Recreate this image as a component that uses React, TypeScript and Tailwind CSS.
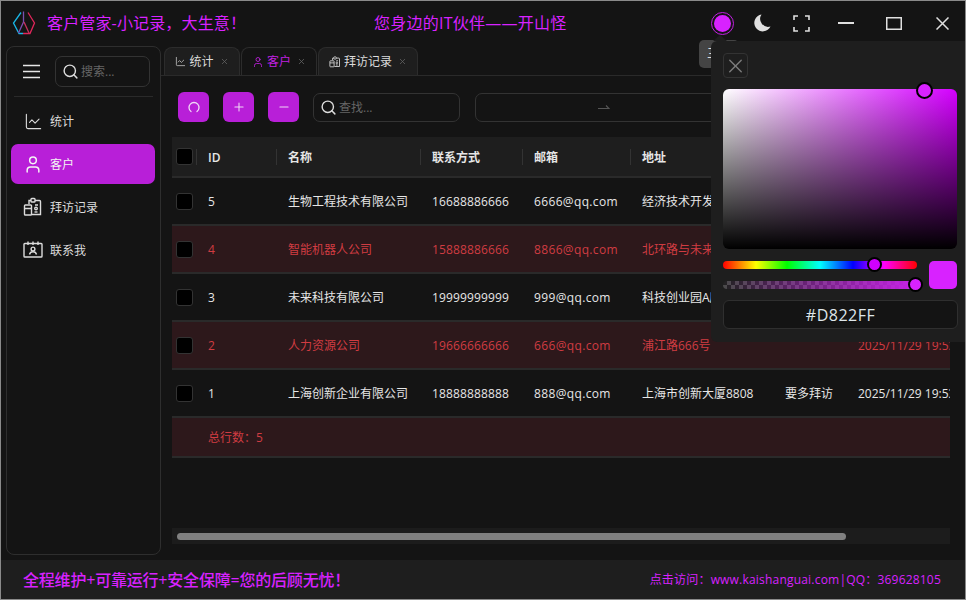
import { ChartLine, Plus, Minus, Search, User, X } from 'lucide-react';

const font = { fontFamily: '"Open Sans", "Noto Sans CJK SC", sans-serif' };

const VisitIcon = ({ size = 20 }: { size?: number }) => (
  <svg width={size} height={size} viewBox="0 0 20 20" fill="none" stroke="currentColor" strokeWidth="1.4">
    <path d="M6 7V3.500h2M12 3.500h4.500a1 1 0 0 1 1 1v13H9" />
    <rect x="8" y="1.500" width="4" height="3.500" rx="0.800" />
    <rect x="1.500" y="8" width="7" height="10" rx="0.800" />
    <path d="M1.500 11.500h7M12 8h3" />
    <circle cx="13" cy="11.500" r="1.300" />
    <path d="M11.500 15h3" />
  </svg>
);

const ContactIcon = () => (
  <svg width="20" height="20" viewBox="0 0 20 20" fill="none" stroke="currentColor" strokeWidth="1.400">
    <rect x="1" y="3.500" width="18" height="13.500" rx="0.800" />
    <path d="M5 1.500v3.500M10 1.500v3.500M15 1.500v3.500" />
    <circle cx="10" cy="9" r="1.900" />
    <path d="M6.500 14.500c.4-2 1.800-2.800 3.500-2.800s3.100.8 3.500 2.800" />
  </svg>
);

const Logo = () => (
  <svg width="24" height="24" viewBox="0 0 24 24" fill="none" strokeWidth="1.300">
    <path d="M9 1.500 1.500 12 7 22.500h4" stroke="#19b6e6" />
    <path d="M16 1.500 22.500 12 18 22.500h-7" stroke="#e0265a" />
    <path d="M11.500 0.500V11L6.500 22" stroke="#7a4fb0" />
    <path d="M12 11l5 11" stroke="#c8305f" />
  </svg>
);

const RefreshArc = () => (
  <svg width="12" height="12" viewBox="0 0 12 12" fill="none" stroke="currentColor" strokeWidth="1.300">
    <path d="M3 10.500A5 5 0 1 1 9 10.500" strokeLinecap="round" />
  </svg>
);

const MoonIcon = () => (
  <svg width="17" height="18" viewBox="0 0 17 18" fill="currentColor">
    <path d="M7.500 0.500A8.500 8.500 0 1 0 16.500 12.500 8 8 0 0 1 7.500 0.500Z" />
  </svg>
);

const FullIcon = () => (
  <svg width="17" height="17" viewBox="0 0 17 17" fill="none" stroke="currentColor" strokeWidth="1.600">
    <path d="M1 5V1h4M12 1h4v4M16 12v4h-4M5 16H1v-4" />
  </svg>
);

const MinIcon = () => (
  <svg width="16" height="2" viewBox="0 0 16 2" stroke="currentColor" strokeWidth="2">
    <path d="M0 1h16" />
  </svg>
);

const MaxIcon = () => (
  <svg width="16" height="13" viewBox="0 0 16 13" fill="none" stroke="currentColor" strokeWidth="1.500">
    <rect x="0.750" y="0.750" width="14.500" height="11.500" />
  </svg>
);

const CloseIcon = () => (
  <svg width="13" height="13" viewBox="0 0 13 13" stroke="currentColor" strokeWidth="1.500">
    <path d="M0.500 0.500l12 12M12.500 0.500l-12 12" />
  </svg>
);

const menu = [
  { label: '统计', icon: <ChartLine size={19} strokeWidth={1.400} /> },
  { label: '客户', icon: <User size={21} strokeWidth={1.800} />, active: true },
  { label: '拜访记录', icon: <VisitIcon /> },
  { label: '联系我', icon: <ContactIcon /> },
];

const rows = [
  { id: '5', name: '生物工程技术有限公司', phone: '16688886666', mail: '6666@qq.com', addr: '经济技术开发区', note: '', time: '' },
  { id: '4', name: '智能机器人公司', phone: '15888886666', mail: '8866@qq.com', addr: '北环路与未来路', note: '', time: '', red: true },
  { id: '3', name: '未来科技有限公司', phone: '19999999999', mail: '999@qq.com', addr: '科技创业园A座', note: '', time: '' },
  { id: '2', name: '人力资源公司', phone: '19666666666', mail: '666@qq.com', addr: '浦江路666号', note: '', time: '2025/11/29 19:53', red: true },
  { id: '1', name: '上海创新企业有限公司', phone: '18888888888', mail: '888@qq.com', addr: '上海市创新大厦8808', note: '要多拜访', time: '2025/11/29 19:53' },
];

const headers = ['ID', '名称', '联系方式', '邮箱', '地址'];
const gridCols = 'grid grid-cols-[24px_80px_144px_102px_108px_143px_73px_200px] w-[974px] items-center';

const Check = () => (
  <span className="w-[17px] h-[17px] bg-black border border-[#333] rounded-[3px] ml-[4px] block" />
);

const ActionButton = ({ children }: { children: React.ReactNode }) => (
  <button className="w-[31px] h-[30px] rounded-[6px] bg-[#b81fd8] text-[#f0d8f6] flex items-center justify-center">
    {children}
  </button>
);

const Tab = ({ label, icon, width, active }: { label: string; icon: React.ReactNode; width: string; active?: boolean }) => (
  <div
    className={`${width} h-[28px] rounded-t-[8px] border border-b-0 border-[#2c2c2c] flex items-center justify-center gap-[3px] text-[12px] ${
      active ? 'bg-[#141414] text-[#c020e0]' : 'bg-[#1e1e1e] text-[#dcdcdc]'
    }`}
  >
    {icon}
    <span>{label}</span>
    <X size={9} className="ml-[3px] text-[#666]" />
  </div>
);

const ColorPicker = () => (
  <div className="absolute left-[710px] top-[40px] w-[255px] h-[301px] bg-[#1e1e1e] rounded-l-[6px] pl-[12px] pr-[9px] pt-[12px] z-10">
    <div className="absolute -top-[6px] left-[2px] w-0 h-0 border-x-[7px] border-x-transparent border-b-[6px] border-b-[#1e1e1e]" />
    <button className="w-[25px] h-[25px] border border-[#333] rounded-[4px] flex items-center justify-center text-[#7d7d7d]">
      <X size={26} strokeWidth={1.400} />
    </button>
    <div className="relative mt-[11px] h-[160px] w-[234px] rounded-[6px] bg-[linear-gradient(to_bottom,transparent,#000),linear-gradient(to_right,#fff,#d400ff)]">
      <span className="absolute left-[193px] -top-[7px] w-[17px] h-[17px] rounded-full bg-[#d822ff] border-2 border-black" />
    </div>
    <div className="flex mt-[12px] gap-[12px]">
      <div className="w-[194px] flex flex-col gap-[12px]">
        <div className="relative h-[8px] rounded-full bg-[linear-gradient(to_right,#f00,#ff0_17%,#0f0_33%,#0ff_50%,#00f_67%,#f0f_83%,#f00)]">
          <span className="absolute left-[144px] -top-[4px] w-[15px] h-[15px] rounded-full bg-[#d000ff] border-2 border-black" />
        </div>
        <div className="relative h-[8px] rounded-full bg-[linear-gradient(to_right,transparent,#c822e8),repeating-conic-gradient(#4a4a4a_0_25%,#222_0_50%)] bg-[length:100%_100%,8px_8px]">
          <span className="absolute left-[185px] -top-[4px] w-[15px] h-[15px] rounded-full bg-[#d822ff] border-2 border-black" />
        </div>
      </div>
      <div className="w-[28px] h-[28px] rounded-[5px] bg-[#d822ff]" />
    </div>
    <div className="mt-[11px] w-[235px] h-[29px] rounded-[6px] border border-[#2f2f2f] bg-[#141414] flex items-center justify-center text-[16px] tracking-[0.5px] text-[#dfe6ea]">
      #D822FF
    </div>
  </div>
);

export default function App() {
  return (
    <div className="relative w-[966px] h-[600px] overflow-hidden border border-[#8a8a8a] bg-[#141414] flex flex-col text-[#e6e6e6]" style={font}>
      {/* Title bar */}
      <header className="h-[44px] shrink-0 flex items-center text-[#d822ff] text-[16px]">
        <div className="ml-[11px] w-[35px]">
          <Logo />
        </div>
        <span className="w-[327px] whitespace-nowrap tracking-[0.15px]">客户管家-小记录，大生意！</span>
        <span className="whitespace-nowrap tracking-[0.25px]">您身边的IT伙伴——开山怪</span>
        <div className="ml-auto flex items-center text-[#e0e0e0]">
          <span className="w-[23px] h-[23px] rounded-full border border-[#c020e0] flex items-center justify-center">
            <span className="w-[17px] h-[17px] rounded-full bg-[#d822ff]" />
          </span>
          <span className="ml-[20px]">
            <MoonIcon />
          </span>
          <span className="ml-[22px]">
            <FullIcon />
          </span>
          <span className="ml-[28px]">
            <MinIcon />
          </span>
          <span className="ml-[32px]">
            <MaxIcon />
          </span>
          <span className="ml-[34px] mr-[16px]">
            <CloseIcon />
          </span>
        </div>
      </header>

      <div className="flex-1 flex min-h-0">
        {/* Sidebar */}
        <aside className="ml-[5px] mt-[1px] mb-[5px] w-[155px] shrink-0 rounded-[8px] border border-[#2e2e2e] bg-[#141414] flex flex-col pl-[4px] pr-[4px]">
          <div className="flex items-center h-[49px] pl-[5px] gap-[9px]">
            <span className="w-[30px] h-[30px] rounded-[6px] flex items-center justify-center text-[#e6e6e6]">
              <svg width="17" height="15" viewBox="0 0 17 15" stroke="currentColor" strokeWidth="1.500">
                <path d="M0 1.500h17M0 7.500h17M0 13.500h17" />
              </svg>
            </span>
            <div className="w-[95px] h-[31px] rounded-[7px] border border-[#333] flex items-center pl-[6px] gap-[2px] text-[12px] text-[#666]">
              <Search size={17} className="text-[#ddd]" />
              <span className="pt-[1px]">搜索...</span>
            </div>
          </div>
          <div className="mx-[3px] h-px bg-[#2a2a2a]" />
          <nav className="mt-[4px] flex flex-col gap-[3px] mr-px">
            {menu.map((m) => (
              <div
                key={m.label}
                className={`h-[40px] rounded-[7px] flex items-center gap-[7px] pl-[12px] text-[12px] ${
                  m.active ? 'bg-[#b81fd8] text-[#f4f4f4]' : 'text-[#dcdcdc]'
                }`}
              >
                <span className="w-[20px] flex justify-center">{m.icon}</span>
                <span className="pt-[2px]">{m.label}</span>
              </div>
            ))}
          </nav>
        </aside>

        {/* Main */}
        <main className="flex-1 min-w-0 flex flex-col overflow-hidden">
          <div className="h-[30px] mt-[1px] shrink-0 flex items-end gap-[1px] pl-[3px] border-b border-[#2a2a2a]">
            <Tab label="统计" width="w-[76px]" icon={<ChartLine size={11} strokeWidth={1.500} />} />
            <Tab label="客户" width="w-[76px]" active icon={<User size={12} strokeWidth={1.700} />} />
            <Tab label="拜访记录" width="w-[100px]" icon={<VisitIcon size={12} />} />
          </div>

          <div className="h-[61px] shrink-0 flex items-center pl-[17px] gap-[14px] pt-[1px]">
            <ActionButton>
              <RefreshArc />
            </ActionButton>
            <ActionButton>
              <Plus size={14} strokeWidth={1.800} />
            </ActionButton>
            <ActionButton>
              <Minus size={14} strokeWidth={1.800} />
            </ActionButton>
            <div className="w-[147px] h-[29px] rounded-[7px] border border-[#333] flex items-center pl-[6px] gap-[2px] text-[12px] text-[#666]">
              <Search size={17} className="text-[#ddd]" />
              <span className="pt-[1px]">查找...</span>
            </div>
            <div className="ml-px w-[258px] shrink-0 h-[29px] rounded-[7px] border border-[#333] flex items-center justify-center">
              <svg width="12" height="6" viewBox="0 0 12 6" fill="none" stroke="#555" strokeWidth="1.100">
                <path d="M0 4.500h11L8 1.500" />
              </svg>
            </div>
          </div>

          {/* Table */}
          <div className="ml-[11px] w-[778px] overflow-hidden text-[12px]">
            <div className={`${gridCols} h-[41px] bg-[#1e1e1e] border-b-2 border-[#2a2a2a] font-semibold`}>
              <Check />
              {headers.map((h) => (
                <div key={h} className="h-[16px] border-l border-[#333] pl-[11px] flex items-center whitespace-nowrap">
                  <span className="pt-[2px]">{h}</span>
                </div>
              ))}
            </div>
            {rows.map((r) => (
              <div
                key={r.id}
                className={`${gridCols} h-[48px] border-b-2 border-[#2a2a2a] whitespace-nowrap ${
                  r.red ? 'bg-[#2d181b] text-[#d03c42]' : 'text-[#e6e6e6]'
                }`}
              >
                <Check />
                <div className="pl-[12px] pt-[2px]">{r.id}</div>
                <div className="pl-[12px] pt-[2px]">{r.name}</div>
                <div className="pl-[12px] pt-[2px] tracking-[0.15px]">{r.phone}</div>
                <div className="pl-[12px] pt-[2px] tracking-[0.35px]">{r.mail}</div>
                <div className="pl-[12px] pt-[2px]">{r.addr}</div>
                <div className="pl-[12px] pt-[2px]">{r.note}</div>
                <div className="pl-[12px] pt-[2px]">{r.time}</div>
              </div>
            ))}
            <div className="h-[40px] bg-[#2d181b] border-b-2 border-[#2a2a2a] flex items-center pl-[36px] pt-[2px] text-[#d03c42]">
              总行数：5
            </div>
          </div>

          <div className="mt-[70px] ml-[11px] w-[778px] h-[16px] bg-[#1c1c1c] flex items-center pl-[5px]">
            <div className="w-[669px] h-[7px] rounded-full bg-[#808080]" />
          </div>
        </main>
      </div>

      {/* Footer */}
      <footer className="h-[39px] shrink-0 bg-[#1e1e1e] flex items-center pl-[22px] pr-[24px] text-[#d822ff]">
        <span className="text-[16px] font-medium whitespace-nowrap tracking-[-0.2px]">全程维护+可靠运行+安全保障=您的后顾无忧！</span>
        <span className="ml-auto text-[12px] whitespace-nowrap tracking-[0.2px]">点击访问：www.kaishanguai.com|QQ：369628105</span>
      </footer>

      {/* Tooltip behind the picker */}
      <div className="absolute left-[698px] top-[39px] w-[40px] h-[28px] rounded-[5px] bg-[#444] flex items-center pl-[8px] text-[12px] text-[#ddd]">
        三
      </div>
      <ColorPicker />
    </div>
  );
}
